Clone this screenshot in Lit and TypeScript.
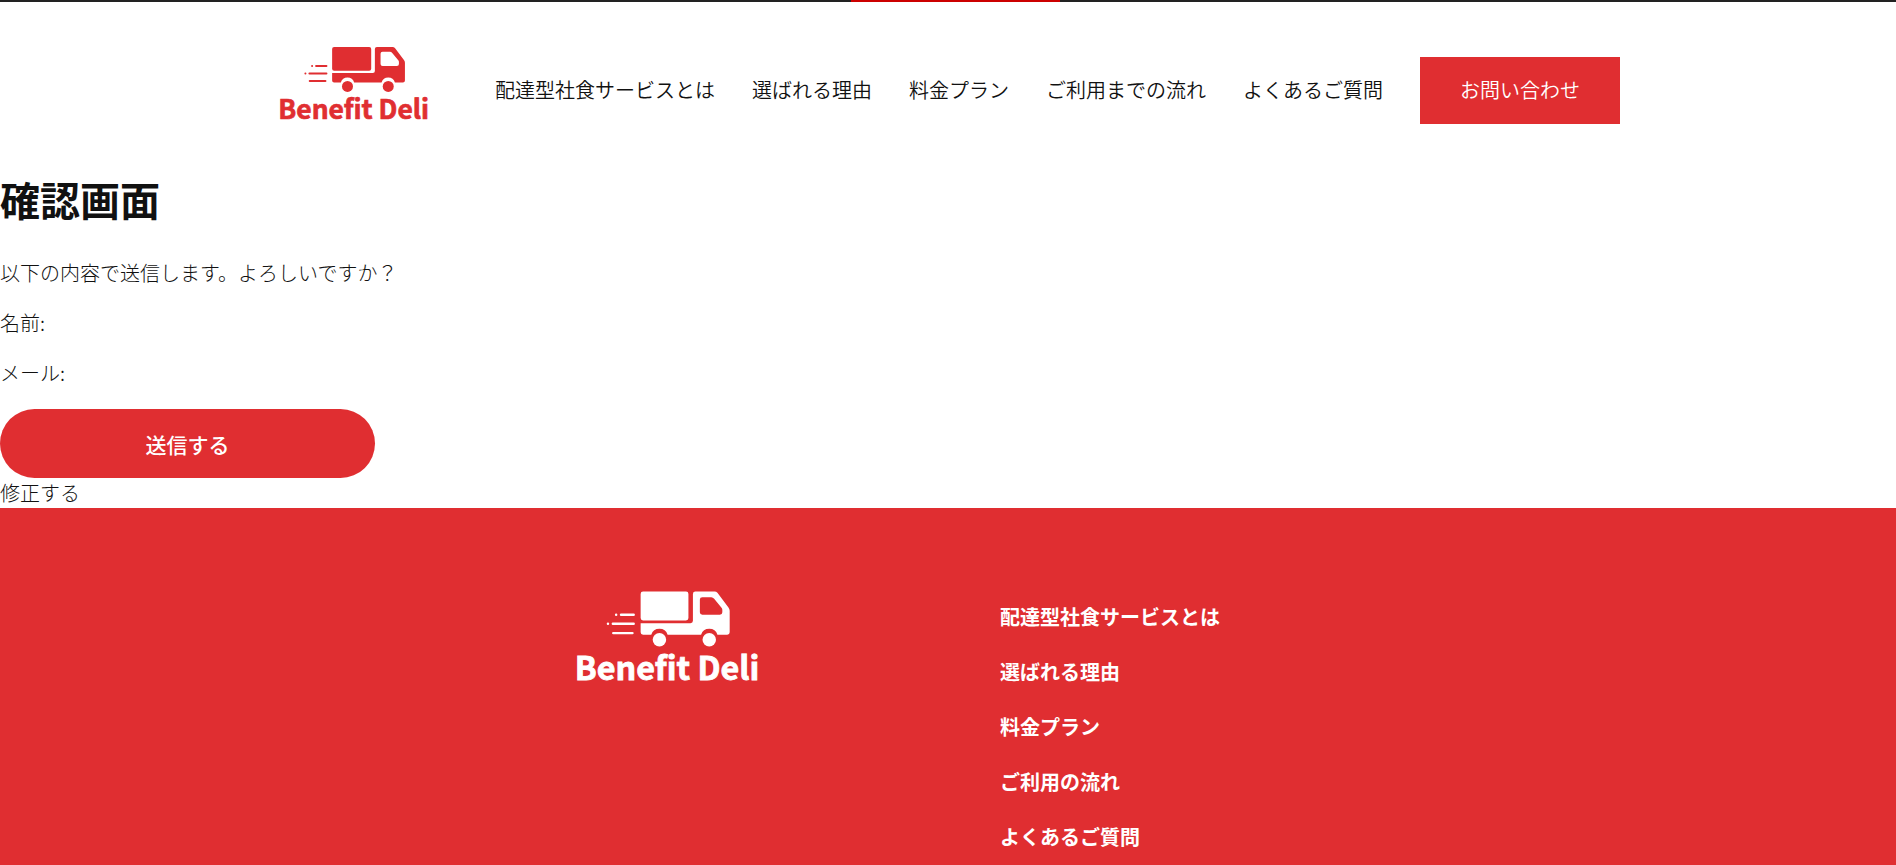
import { LitElement, html, css } from "lit";
import { customElement } from "lit/decorators.js";

@customElement("deli-logo")
export class DeliLogo extends LitElement {
  static styles = css`
    :host {
      display: block;
    }
    .logo {
      display: block;
      width: 100%;
      height: auto;
      fill: currentColor;
    }
    .name {
      font-family: "Noto Sans CJK JP", sans-serif;
      font-size: 79px;
      font-weight: 700;
      stroke: currentColor;
      stroke-width: 2;
    }
    .speed {
      stroke: currentColor;
      stroke-width: 6;
      stroke-linecap: round;
    }
  `;

  render() {
    return html`
      <svg class="logo" viewBox="50 45 470 250" role="img" aria-label="Benefit Deli">
        <rect x="218" y="51" width="117" height="71" rx="6" />
        <path
          fill-rule="evenodd"
          d="M346 57q0-6 6-6h47q4 0 7 3l27 36q3 4 3 8v53q0 6-6 6h-24a21 21 0 0 0-40 0h-82a21 21 0 0 0-40 0h-20q-6 0-6-6v-22h122q6 0 6-6zM363 71v31q0 6 6 6h43q6 0 6-6v-6q0-3-2-5l-18-22q-3-4-7-4h-22q-6 0-6 6z"
        />
        <circle cx="264" cy="169" r="16.500" />
        <circle cx="386" cy="169" r="16.500" />
        <path class="speed" d="M158 108h.1M170 108h31M138 130h.1M150 130h51M151 153h47" />
        <text class="name" x="57" y="267">Benefit Deli</text>
      </svg>
    `;
  }
}

@customElement("app-root")
export class AppRoot extends LitElement {
  static styles = css`
    :host {
      display: block;
      height: 100vh;
      overflow: hidden;
      background: #fff;
      color: #111;
      font: 300 20px/30px "Noto Sans CJK JP", sans-serif;
    }
    a {
      color: inherit;
      text-decoration: none;
    }
    ul {
      list-style: none;
      margin: 0;
      padding: 0;
    }
    .strip {
      display: flex;
      justify-content: center;
      height: 2px;
      background: #222;
    }
    .strip-mark {
      width: 11%;
      margin-left: 15px;
      background: #c00;
    }
    .header {
      display: flex;
      align-items: center;
      justify-content: space-between;
      box-sizing: border-box;
      max-width: 1344px;
      min-height: 142px;
      margin: 0 auto;
      padding-top: 34px;
    }
    .header-logo {
      width: 157px;
      color: #e02e31;
      padding-bottom: 6px;
    }
    .nav {
      display: flex;
      align-items: center;
      gap: 37px;
      font-weight: 350;
      white-space: nowrap;
    }
    .contact {
      display: block;
      padding: 18px 40px 19px;
      background: #e02e31;
      color: #fff;
    }
    .title {
      margin: 25px 0 29px;
      font-size: 40px;
      line-height: 60px;
      font-weight: 700;
    }
    .line {
      margin: 0 0 20px;
    }
    .submit {
      display: block;
      width: 375px;
      height: 69px;
      margin: 21px 0 0;
      border: 0;
      border-radius: 35px;
      background: #e02e31;
      color: #fff;
      font: 500 21px/30px "Noto Sans CJK JP", sans-serif;
      cursor: pointer;
    }
    .back {
      display: block;
    }
    .footer {
      display: flex;
      justify-content: center;
      gap: 236px;
      min-height: 500px;
      box-sizing: border-box;
      padding: 81px 0;
      background: #e02e31;
      color: #fff;
    }
    .footer-logo {
      width: 192px;
    }
    .footer-nav {
      display: flex;
      flex-direction: column;
      gap: 25px;
      width: 324px;
      padding-top: 13px;
      font-weight: 700;
    }
  `;

  private links = ["配達型社食サービスとは", "選ばれる理由", "料金プラン", "ご利用までの流れ", "よくあるご質問"];
  private footerLinks = ["配達型社食サービスとは", "選ばれる理由", "料金プラン", "ご利用の流れ", "よくあるご質問"];

  render() {
    return html`
      <div class="strip"><div class="strip-mark"></div></div>
      <header class="header">
        <a href="#"><deli-logo class="header-logo"></deli-logo></a>
        <nav>
          <ul class="nav">
            ${this.links.map((label) => html`<li><a href="#">${label}</a></li>`)}
            <li><a class="contact" href="#">お問い合わせ</a></li>
          </ul>
        </nav>
      </header>
      <main>
        <h1 class="title">確認画面</h1>
        <p class="line">以下の内容で送信します。よろしいですか？</p>
        <p class="line">名前:</p>
        <p class="line">メール:</p>
        <button class="submit" type="button">送信する</button>
        <a class="back" href="#">修正する</a>
      </main>
      <footer class="footer">
        <a href="#"><deli-logo class="footer-logo"></deli-logo></a>
        <ul class="footer-nav">
          ${this.footerLinks.map((label) => html`<li><a href="#">${label}</a></li>`)}
        </ul>
      </footer>
    `;
  }
}
